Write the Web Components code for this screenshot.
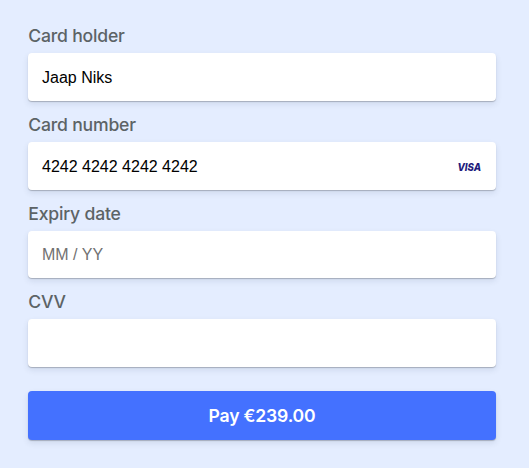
<!DOCTYPE html>
<html lang="en">
<head>
<meta charset="utf-8">
<title>Payment</title>
<style>
html,body{margin:0;height:100%;background:#e4edff}
</style>
</head>
<body>
<payment-form>
  <form-field label="Card holder" value="Jaap Niks"></form-field>
  <form-field label="Card number" value="4242 4242 4242 4242"><visa-logo></visa-logo></form-field>
  <form-field label="Expiry date" placeholder="MM / YY"></form-field>
  <form-field label="CVV"></form-field>
  <pay-button>Pay €239.00</pay-button>
</payment-form>
<script>
class PaymentForm extends HTMLElement {
  constructor() {
    super();
    this.attachShadow({mode: 'open'}).innerHTML = `
      <style>
        :host{display:flex;flex-direction:column;box-sizing:border-box;width:529px;height:468px;padding:24.3px 33px 0 28px}
      </style>
      <slot></slot>`;
  }
}
class FormField extends HTMLElement {
  constructor() {
    super();
    this.attachShadow({mode: 'open'}).innerHTML = `
      <style>
        :host{display:flex;flex-direction:column;height:88.7px;flex:none}
        .label{height:29px;padding-left:.3px;font:500 17.6px/24px Inter,sans-serif;letter-spacing:-.2px;color:#5c6366;box-sizing:border-box}
        .box{display:flex;align-items:center;height:47.6px;box-sizing:border-box;padding:1.9px 14px 0;background:#fff;border-radius:4px;
          box-shadow:0 1px 1px rgba(0,0,0,.22),0 3px 6px rgba(18,42,66,.1);
          font:16px/20px "Liberation Sans",Arial,sans-serif;color:#000}
        .text{flex:1;white-space:pre}
        .hint{color:#717171}
      </style>
      <div class="label"></div>
      <div class="box"><span class="text"></span><slot></slot></div>`;
  }
  connectedCallback() {
    const root = this.shadowRoot;
    const value = this.getAttribute('value');
    const text = root.querySelector('.text');
    root.querySelector('.label').textContent = this.getAttribute('label');
    text.textContent = value || this.getAttribute('placeholder') || '';
    text.classList.toggle('hint', !value);
  }
}
class VisaLogo extends HTMLElement {
  constructor() {
    super();
    this.attachShadow({mode: 'open'}).innerHTML = `
      <style>
        :host{display:block;width:26px;height:20px;margin-right:-1px}
        svg{display:block;overflow:visible}
      </style>
      <svg width="26" height="20" viewBox="0 -4 26 20" aria-label="Visa">
        <text x="0.5" y="10" textLength="23.6" lengthAdjust="spacingAndGlyphs" font-family="Inter,sans-serif" font-size="10.6" font-weight="800" font-style="italic" fill="#211b7c">VISA</text>
      </svg>`;
  }
}
class PayButton extends HTMLElement {
  constructor() {
    super();
    this.attachShadow({mode: 'open'}).innerHTML = `
      <style>
        :host{display:flex;flex:none;margin-top:11.9px;height:49px}
        button{flex:1;border:0;padding:1px 0 0;border-radius:4px;background:#4471ff;color:#fff;
          font:600 17.6px/24px Inter,sans-serif;letter-spacing:-.2px;box-shadow:0 1px 1px rgba(0,0,0,.22),0 3px 6px rgba(18,42,66,.1)}
      </style>
      <button type="button"><slot></slot></button>`;
  }
}
customElements.define('payment-form', PaymentForm);
customElements.define('form-field', FormField);
customElements.define('visa-logo', VisaLogo);
customElements.define('pay-button', PayButton);
</script>
</body>
</html>
